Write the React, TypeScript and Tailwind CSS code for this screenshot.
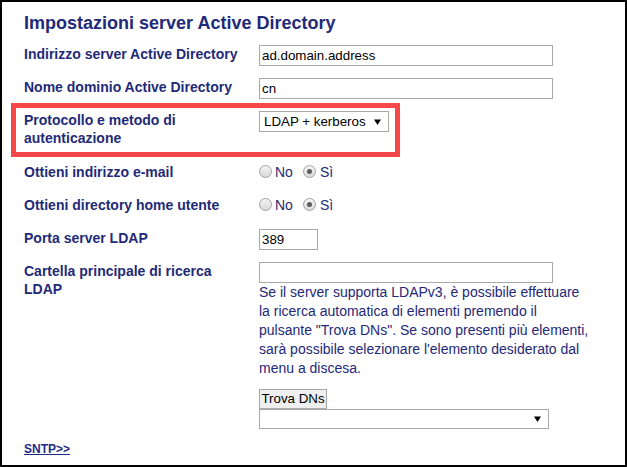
import React from "react";

function Label({ children }: { children: React.ReactNode }) {
    return (
        <div className="w-[235px] shrink-0 text-[14px] font-bold leading-[18px] text-[#1f2a78]">
            {children}
        </div>
    );
}

function TextBox({ value, className }: { value: string; className: string }) {
    return (
        <input
            readOnly
            value={value}
            className={`h-[21px] border border-[#a9a9a9] bg-white px-[2px] text-[13.33px] text-black outline-none ${className}`}
        />
    );
}

function Caret() {
    return (
        <svg width="7" height="6" viewBox="0 0 7 6" className="shrink-0">
            <polygon points="0,0.5 7,0.5 3.5,6" fill="#000" />
        </svg>
    );
}

function Dropdown({ value, className }: { value: string; className: string }) {
    return (
        <div
            className={`flex items-center justify-between border border-[#a9a9a9] bg-white pl-[4px] pr-[7px] text-[13.33px] leading-none text-black ${className}`}
        >
            <span>{value}</span>
            <Caret />
        </div>
    );
}

function Radio({ checked }: { checked?: boolean }) {
    return (
        <span className="mb-[2px] flex h-[13px] w-[13px] shrink-0 items-center justify-center rounded-full border border-[#a2a2a2] bg-linear-to-b from-[#f3f3f3] to-[#dadada]">
            {checked && <span className="h-[5px] w-[5px] rounded-full bg-[#5c5c5c]" />}
        </span>
    );
}

function YesNo() {
    return (
        <div className="flex h-[18px] items-center text-[14px] text-[#1f2a78]">
            <Radio />
            <span className="ml-[3px]">No</span>
            <span className="ml-[10px]">
                <Radio checked />
            </span>
            <span className="ml-[4px]">Sì</span>
        </div>
    );
}

export default function App() {
    return (
        <div className="relative h-[467px] w-[627px] overflow-hidden border-2 border-black bg-white pl-[22px] pt-[10px] font-['Liberation_Sans',Arial,sans-serif]">
            <h1 className="text-[18px] font-bold leading-[22px] text-[#1f2a78]">
                Impostazioni server Active Directory
            </h1>

            <div className="mt-[11px] flex flex-col gap-3">
                <div className="flex">
                    <Label>Indirizzo server Active Directory</Label>
                    <TextBox value="ad.domain.address" className="w-[294px]" />
                </div>
                <div className="flex">
                    <Label>Nome dominio Active Directory</Label>
                    <TextBox value="cn" className="w-[294px]" />
                </div>
                <div className="flex">
                    <Label>
                        Protocollo e metodo di
                        <br />
                        autenticazione
                    </Label>
                    <Dropdown value="LDAP + kerberos" className="h-[21px] w-[130px]" />
                </div>
                <div className="mt-1 flex min-h-[21px]">
                    <Label>Ottieni indirizzo e-mail</Label>
                    <YesNo />
                </div>
                <div className="flex min-h-[21px]">
                    <Label>Ottieni directory home utente</Label>
                    <YesNo />
                </div>
                <div className="flex">
                    <Label>Porta server LDAP</Label>
                    <TextBox value="389" className="w-[59px]" />
                </div>
                <div className="flex">
                    <Label>
                        Cartella principale di ricerca
                        <br />
                        LDAP
                    </Label>
                    <div className="flex flex-col">
                        <TextBox value="" className="w-[294px]" />
                        <p className="w-[333px] text-[14px] leading-[19px] text-[#24287a]">
                            Se il server supporta LDAPv3, è possibile effettuare la ricerca
                            automatica di elementi premendo il pulsante "Trova DNs". Se sono
                            presenti più elementi, sarà possibile selezionare l'elemento
                            desiderato dal menu a discesa.
                        </p>
                        <button className="mt-[11px] h-[20px] w-[68px] border border-[#a9a9a9] bg-[#efefef] text-[13.33px] leading-none text-black">
                            Trova DNs
                        </button>
                        <Dropdown value="" className="h-[20px] w-[290px]" />
                    </div>
                </div>
            </div>

            <a
                href="#"
                className="mt-[13px] block w-fit text-[12px] font-bold leading-[15px] text-[#1f2a88] underline"
            >
                SNTP&gt;&gt;
            </a>

            <div className="pointer-events-none absolute left-[9px] top-[101px] h-[54px] w-[389px] border-[5px] border-[#f64848]" />
        </div>
    );
}
